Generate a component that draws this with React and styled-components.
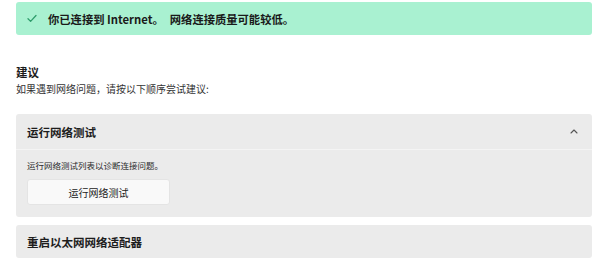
import React from "react";
import styled, { createGlobalStyle } from "styled-components";

const Global = createGlobalStyle`
  html, body { margin: 0; padding: 0; background: #ffffff; }
  body { font-family: "Noto Sans CJK SC", "Noto Sans", sans-serif; color: #1b1b1b; }
`;

const Page = styled.div`
  width: 600px;
  height: 264px;
  box-sizing: border-box;
  padding: 2px 8px 0 16px;
  display: flex;
  flex-direction: column;
  overflow: hidden;
`;

const Banner = styled.div`
  height: 33px;
  background: #a9f1d1;
  border-radius: 3px;
  display: flex;
  align-items: center;
  padding-left: 11px;
  gap: 11px;
  font-size: 11.3px;
  font-weight: 700;
  color: #1a1a1a;
`;

const Gap = styled.span`
  display: inline-block;
  width: 6px;
`;

const Section = styled.div`
  margin-top: 29px;
  display: flex;
  flex-direction: column;
`;

const Heading = styled.div`
  font-size: 11.5px;
  font-weight: 700;
  line-height: 16px;
`;

const Sub = styled.div`
  font-size: 10px;
  line-height: 14px;
  margin-top: 2px;
  color: #333;
`;

const Card = styled.div`
  margin-top: ${(p) => p.$mt}px;
  background: #ebebeb;
  border-radius: 3px;
  display: flex;
  flex-direction: column;
`;

const CardHeader = styled.div`
  height: ${(p) => p.$h}px;
  display: flex;
  align-items: center;
  justify-content: space-between;
  padding: 0 14px 0 11px;
  font-size: 11.5px;
  font-weight: 700;
  color: #1d1d1d;
  border-bottom: ${(p) => (p.$divider ? "1px solid #f4f4f4" : "none")};
`;

const CardBody = styled.div`
  padding: 9px 11px 12px 11px;
  display: flex;
  flex-direction: column;
  gap: 8px;
`;

const BodyText = styled.div`
  font-size: 8.5px;
  line-height: 12px;
  color: #2a2a2a;
`;

const Button = styled.button`
  width: 143px;
  height: 26px;
  background: #f9f9f9;
  border: 1px solid #e4e4e4;
  border-radius: 3px;
  font-family: inherit;
  font-size: 10px;
  color: #222;
  padding: 0;
`;

const Check = () => (
  <svg width="10" height="9" viewBox="0 0 10 9">
    <path d="M1 4.8 L3.6 7.4 L9 1.5" fill="none" stroke="#2f9d6c" strokeWidth="1.3" strokeLinecap="round" strokeLinejoin="round" />
  </svg>
);

const Chevron = () => (
  <svg width="8" height="5" viewBox="0 0 8 5">
    <path d="M1 4 L4 1 L7 4" fill="none" stroke="#555" strokeWidth="1.1" strokeLinecap="round" strokeLinejoin="round" />
  </svg>
);

export default function App() {
  return (
    <>
      <Global />
      <Page>
        <Banner>
          <Check />
          <span>
            你已连接到 Internet。<Gap />网络连接质量可能较低。
          </span>
        </Banner>
        <Section>
          <Heading>建议</Heading>
          <Sub>如果遇到网络问题，请按以下顺序尝试建议:</Sub>
        </Section>
        <Card $mt={18}>
          <CardHeader $h={35} $divider>
            <span>运行网络测试</span>
            <Chevron />
          </CardHeader>
          <CardBody>
            <BodyText>运行网络测试列表以诊断连接问题。</BodyText>
            <Button>运行网络测试</Button>
          </CardBody>
        </Card>
        <Card $mt={8}>
          <CardHeader $h={33}>
            <span>重启以太网网络适配器</span>
          </CardHeader>
        </Card>
      </Page>
    </>
  );
}
